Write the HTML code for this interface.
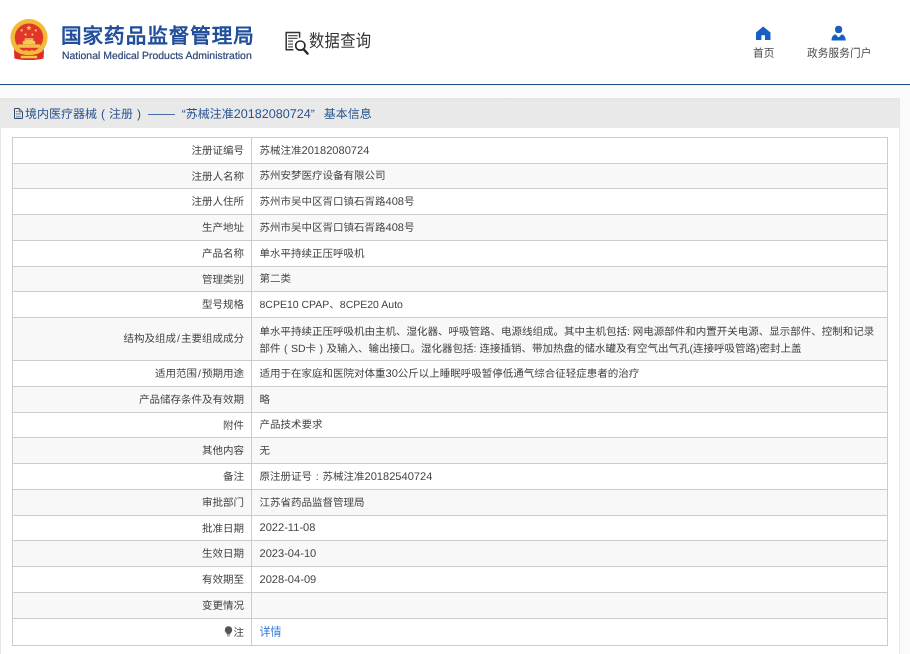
<!DOCTYPE html>
<html lang="zh-CN">
<head>
<meta charset="utf-8">
<style>
html,body{margin:0;padding:0;}
body{width:910px;height:654px;overflow:hidden;position:relative;background:#fff;font-family:"Liberation Sans",sans-serif;text-rendering:geometricPrecision;}
.abs{position:absolute;}
#hdr{left:0;top:0;width:910px;height:84px;background:#fff;}
#hline{left:0;top:84px;width:910px;height:1px;background:#1c4f82;}
#hline2{left:0;top:85px;width:910px;height:13px;background:linear-gradient(#eaf8fb 0,#eaf8fb 1px,#fcfbfb 1px,#fbfbfb 100%);}
#t1{left:61px;top:21.7px;font-size:20.6px;letter-spacing:0.95px;font-weight:bold;color:#214f9b;white-space:nowrap;line-height:30px;}
#t2{left:62px;top:51.1px;font-size:10.45px;color:#2c4678;-webkit-text-stroke:0.2px #2c4678;white-space:nowrap;line-height:12px;}
#sj{left:309px;top:27.1px;letter-spacing:0.3px;font-size:15.3px;color:#333;white-space:nowrap;line-height:26px;transform:scaleY(1.16);transform-origin:0 0;}
.nav{font-size:10.6px;letter-spacing:0.15px;color:#4a4a4a;white-space:nowrap;line-height:14px;transform:scaleY(1.08);transform-origin:0 0;}
#bar{left:0;top:98px;width:899px;height:30px;background:linear-gradient(#e4e4e4 0,#e9e9e9 4px,#e9e9e9 100%);}
#bartxt{left:25px;top:99.6px;height:29px;line-height:29px;font-size:12px;color:#2a5592;white-space:nowrap;}
#panel{left:1px;top:128px;width:898px;height:526px;background:#fff;}
#lstrip{left:0;top:127px;width:1px;height:527px;background:#e8e8e8;}
#rstrip{left:899px;top:98px;width:1px;height:556px;background:#e6e6e6;}
#rfill{left:900px;top:98px;width:10px;height:556px;background:#fafafa;}
.row{position:absolute;left:12px;width:876px;border-top:1px solid #cccccc;border-left:1px solid #cccccc;border-right:1px solid #cccccc;box-sizing:border-box;font-size:10.5px;color:#444;}
.row.g{background:#f8f8f8;}
.row .l{position:absolute;left:0;top:0;bottom:0;width:239px;border-right:1px solid #cccccc;text-align:right;box-sizing:border-box;padding-right:7px;display:flex;align-items:center;justify-content:flex-end;white-space:nowrap;}
.row .v{position:absolute;left:246.5px;top:0;bottom:0;right:0;padding-top:1.6px;display:flex;align-items:center;white-space:nowrap;line-height:16.7px;}
.n{font-size:11.1px;}
.sl{margin:0 1px;}
.fw{display:inline-block;width:12px;text-align:center;}
.fw2{display:inline-block;width:10.5px;text-align:center;}
#tbot{left:12px;top:645px;width:876px;height:1px;background:#cccccc;}
</style>
</head>
<body>
<div id="root" style="position:absolute;left:0;top:0;width:910px;height:654px;will-change:transform;">
<div class="abs" id="hdr"></div>
<!-- emblem -->
<svg class="abs" style="left:8px;top:16px" width="42" height="46" viewBox="0 0 42 46">
  <circle cx="21" cy="21.6" r="18.6" fill="#f2bb35"/>
  <circle cx="21" cy="21.6" r="14.2" fill="#e2362a"/>
  <path d="M9.5 28.4h23v3.4h-23z" fill="#f2c04a"/>
  <path d="M14.8 28.4v-3.3h1.8v-1.5h8.8v1.5h1.8v3.3z" fill="#f5c95a"/>
  <path d="M16.2 23.6h9.6l-1-1.3h-7.6z" fill="#f5c95a"/>
  <path d="M20.9 9.3l0.75 1.8 1.95.1-1.5 1.25.5 1.9-1.7-1.05-1.7 1.05.5-1.9-1.5-1.25 1.95-.1z" fill="#f6cc5a"/>
  <circle cx="13.7" cy="14.4" r="1.1" fill="#f6cc5a"/><circle cx="27.8" cy="14.4" r="1.1" fill="#f6cc5a"/>
  <circle cx="17.5" cy="18.6" r="1.1" fill="#f6cc5a"/><circle cx="24.4" cy="18.6" r="1.1" fill="#f6cc5a"/>
  <path d="M6 32.5 C8 36.5 13 39 21 39 C29 39 34 36.5 36 32.5 L35.6 42.5 C31 43.6 26 44 21 44 C16 44 11 43.6 6.4 42.5 Z" fill="#dc2e22"/>
  <path d="M14.5 36.3 C16.5 33.6 19.8 34 21 35.6 C22.2 34 25.5 33.6 27.5 36.3 C25.5 38.4 22.2 38 21 37 C19.8 38 16.5 38.4 14.5 36.3z" fill="#f2bb35"/>
  <path d="M12.8 39.8h16.4v2.5h-16.4z" fill="#f3c555"/>
</svg>
<div class="abs" id="t1">国家药品监督管理局</div>
<div class="abs" id="t2">National Medical Products Administration</div>
<!-- data search icon -->
<svg class="abs" style="left:284px;top:30px" width="26" height="26" viewBox="0 0 26 26">
  <path d="M9.4 19.8H2.2V2.6H15.6V7.8" fill="none" stroke="#333" stroke-width="1.5"/>
  <path d="M4.1 5.6h9.5M4.1 8.3h9.5M4.1 11.2h4.9M4.1 14.1h4.9M4.1 16.8h4.9" stroke="#555" stroke-width="1.2"/>
  <circle cx="16.3" cy="15.6" r="4.6" fill="#fff" stroke="#252525" stroke-width="1.7"/>
  <path d="M19.6 19.3L23.6 23.6" stroke="#252535" stroke-width="2.3" stroke-linecap="round"/>
</svg>
<div class="abs" id="sj">数据查询</div>
<!-- nav icons -->
<svg class="abs" style="left:756px;top:26px" width="15" height="15" viewBox="0 0 15 15">
  <path d="M7.2 0.5L14.5 6.5V14H9V9.3H5.4V14H0V6.5z" fill="#1760c2"/>
</svg>
<div class="abs nav" style="left:753px;top:46.3px">首页</div>
<svg class="abs" style="left:831px;top:25px" width="16" height="16" viewBox="0 0 16 16">
  <circle cx="7.6" cy="4.4" r="3.6" fill="#1760c2"/>
  <path d="M0.5 15.5C0.5 12 2 10 4.5 9.3L7.6 12.5L10.7 9.3C13.2 10 14.7 12 14.7 15.5z" fill="#1760c2"/>
</svg>
<div class="abs nav" style="left:807px;top:46.3px">政务服务门户</div>

<div class="abs" id="hline"></div>
<div class="abs" id="hline2"></div>
<div class="abs" id="bar"></div>
<svg class="abs" style="left:14px;top:108px" width="10" height="12" viewBox="0 0 10 12">
  <path d="M0.5 0.5H5.2L8.5 3.8V10.5H0.5z" fill="none" stroke="#34496e" stroke-width="1"/>
  <path d="M5.2 0.5V3.8H8.5" fill="none" stroke="#34496e" stroke-width="0.9"/>
  <path d="M2 3.5H3.6M2 6H6.8M2 8.8H6.8" stroke="#5a6f95" stroke-width="0.9"/>
</svg>
<div class="abs" id="bartxt">境内医疗器械<span class="fw">(</span>注册<span class="fw">)</span><span style="display:inline-block;width:27px;height:1px;background:#4a6da6;vertical-align:middle;margin-left:3.2px;position:relative;top:-0.3px"></span><span style="display:inline-block;width:10.5px;text-align:right">“</span>苏械注准<span style="font-size:12.6px">20182080724</span><span style="display:inline-block;width:13px;text-align:left">”</span>基本信息</div>
<div class="abs" id="panel"></div>
<div class="abs" id="lstrip"></div>
<div class="abs" id="rstrip"></div>
<div class="abs" id="rfill"></div>

<div class="row" style="top:137px;height:26px"><div class="l"><div>注册证编号</div></div><div class="v"><div>苏械注准<span class="n">20182080724</span></div></div></div>
<div class="row g" style="top:163px;height:25px"><div class="l"><div>注册人名称</div></div><div class="v"><div>苏州安梦医疗设备有限公司</div></div></div>
<div class="row" style="top:188px;height:26px"><div class="l"><div>注册人住所</div></div><div class="v"><div>苏州市吴中区胥口镇石胥路<span class="n">408</span>号</div></div></div>
<div class="row g" style="top:214px;height:26px"><div class="l"><div>生产地址</div></div><div class="v"><div>苏州市吴中区胥口镇石胥路<span class="n">408</span>号</div></div></div>
<div class="row" style="top:240px;height:26px"><div class="l"><div>产品名称</div></div><div class="v"><div>单水平持续正压呼吸机</div></div></div>
<div class="row g" style="top:266px;height:25px"><div class="l"><div>管理类别</div></div><div class="v"><div>第二类</div></div></div>
<div class="row" style="top:291px;height:26px"><div class="l"><div>型号规格</div></div><div class="v"><div>8CPE10 CPAP、8CPE20 Auto</div></div></div>
<div class="row g" style="top:317px;height:43px"><div class="l" style="padding-bottom:2px"><div>结构及组成<span class="sl">/</span>主要组成成分</div></div><div class="v" style="padding-top:3px"><div>单水平持续正压呼吸机由主机、湿化器、呼吸管路、电源线组成。其中主机包括: 网电源部件和内置开关电源、显示部件、控制和记录<br>部件<span class="fw2">(</span>SD卡<span class="fw2">)</span>及输入、输出接口。湿化器包括: 连接插销、带加热盘的储水罐及有空气出气孔(连接呼吸管路)密封上盖</div></div></div>
<div class="row" style="top:360px;height:26px"><div class="l"><div>适用范围<span class="sl">/</span>预期用途</div></div><div class="v"><div>适用于在家庭和医院对体重<span class="n">30</span>公斤以上睡眠呼吸暂停低通气综合征轻症患者的治疗</div></div></div>
<div class="row g" style="top:386px;height:26px"><div class="l"><div>产品储存条件及有效期</div></div><div class="v"><div>略</div></div></div>
<div class="row" style="top:412px;height:25px"><div class="l"><div>附件</div></div><div class="v"><div>产品技术要求</div></div></div>
<div class="row g" style="top:437px;height:26px"><div class="l"><div>其他内容</div></div><div class="v"><div>无</div></div></div>
<div class="row" style="top:463px;height:26px"><div class="l"><div>备注</div></div><div class="v"><div>原注册证号<span class="fw2">:</span>苏械注准<span class="n">20182540724</span></div></div></div>
<div class="row g" style="top:489px;height:26px"><div class="l"><div>审批部门</div></div><div class="v"><div>江苏省药品监督管理局</div></div></div>
<div class="row" style="top:515px;height:25px"><div class="l"><div>批准日期</div></div><div class="v"><div><span class="n">2022-11-08</span></div></div></div>
<div class="row g" style="top:540px;height:26px"><div class="l"><div>生效日期</div></div><div class="v"><div><span class="n">2023-04-10</span></div></div></div>
<div class="row" style="top:566px;height:26px"><div class="l"><div>有效期至</div></div><div class="v"><div><span class="n">2028-04-09</span></div></div></div>
<div class="row g" style="top:592px;height:26px"><div class="l"><div>变更情况</div></div><div class="v"><div></div></div></div>
<div class="row" style="top:618px;height:27px"><div class="l"><div><svg width="9" height="11" viewBox="0 0 9 11" style="margin-right:0.5px;position:relative;top:1px"><path d="M4.5 0.3C6.6 0.3 8.2 1.9 8.2 3.9C8.2 5.5 7.2 6.4 6.3 7.3V8.6H2.7V7.3C1.8 6.4 0.8 5.5 0.8 3.9C0.8 1.9 2.4 0.3 4.5 0.3z" fill="#555"/><path d="M3 9.2h3v1.2H3z" fill="#999"/></svg>注</div></div><div class="v" style="color:#3b7dd8;font-size:11px"><div><span style="display:inline-block;transform:scaleY(1.12);position:relative;top:1px">详情</span></div></div></div>
<div class="abs" id="tbot"></div>
</div>
</body>
</html>
